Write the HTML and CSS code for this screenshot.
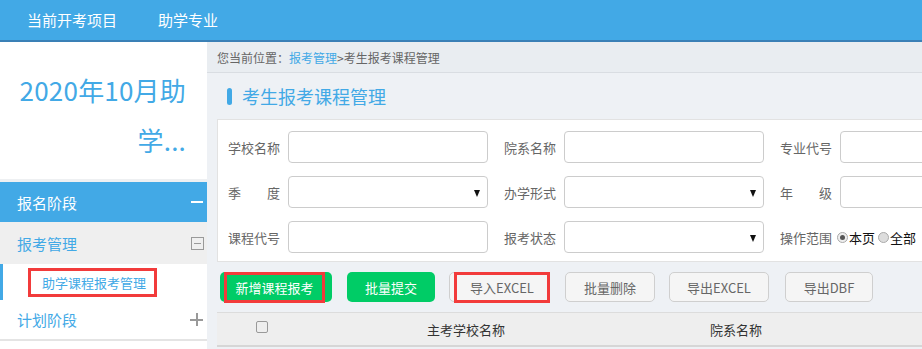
FILE: index.html
```html
<!DOCTYPE html>
<html lang="zh">
<head>
<meta charset="utf-8">
<title>考生报考课程管理</title>
<link rel="stylesheet" href="styles.css">
</head>
<body>
<header class="topbar">
  <nav class="topnav">
    <a class="topnav-item">当前开考项目</a>
    <a class="topnav-item">助学专业</a>
  </nav>
</header>
<div class="layout">
  <aside class="sidebar">
    <div class="side-title">2020年10月助学...</div>
    <div class="side-stage side-stage-open">
      <span>报名阶段</span>
      <span class="stage-minus"></span>
    </div>
    <div class="side-group">
      <span>报考管理</span>
      <span class="box-minus"></span>
    </div>
    <div class="side-item side-item-active">
      <span class="side-item-text hl">助学课程报考管理</span>
    </div>
    <div class="side-stage side-stage-closed">
      <span>计划阶段</span>
      <span class="stage-plus"></span>
    </div>
  </aside>
  <main class="main">
    <div class="crumb">您当前位置：<a class="crumb-link">报考管理</a>&gt;考生报考课程管理</div>
    <div class="content">
      <h1 class="page-title">考生报考课程管理</h1>
      <div class="filter">
        <div class="frow">
          <label class="flabel">学校名称</label><div class="finput"></div>
          <label class="flabel">院系名称</label><div class="finput"></div>
          <label class="flabel">专业代号</label><div class="finput"></div>
        </div>
        <div class="frow">
          <label class="flabel just">季度</label><div class="finput fselect"><span class="arrow"></span></div>
          <label class="flabel">办学形式</label><div class="finput fselect"><span class="arrow"></span></div>
          <label class="flabel just">年级</label><div class="finput"></div>
        </div>
        <div class="frow">
          <label class="flabel">课程代号</label><div class="finput"></div>
          <label class="flabel">报考状态</label><div class="finput fselect"><span class="arrow"></span></div>
          <label class="flabel">操作范围</label>
          <div class="radios">
            <span class="radio radio-on"></span><span class="rtext">本页</span>
            <span class="radio"></span><span class="rtext">全部</span>
          </div>
        </div>
      </div>
      <div class="toolbar">
        <button class="btn btn-green btn-w1"><span class="hl hl-btn1">新增课程报考</span></button>
        <button class="btn btn-green btn-w2">批量提交</button>
        <button class="btn btn-gray btn-w3"><span class="hl hl-btn3">导入EXCEL</span></button>
        <button class="btn btn-gray btn-w6">批量删除</button>
        <button class="btn btn-gray btn-w4">导出EXCEL</button>
        <button class="btn btn-gray btn-w5">导出DBF</button>
      </div>
      <div class="thead">
        <div class="th th-check"><span class="checkbox"></span></div>
        <div class="th th-school">主考学校名称</div>
        <div class="th th-dept">院系名称</div>
        <div class="th th-rest"></div>
      </div>
    </div>
  </main>
</div>
</body>
</html>
```
FILE: styles.css
```css
* { box-sizing: border-box; }
html, body { margin: 0; padding: 0; }
body {
  width: 922px;
  height: 349px;
  overflow: hidden;
  background: #eef1f5;
  font-family: "Noto Sans CJK SC", "Noto Sans", sans-serif;
  color: #666;
}
.topbar {
  height: 42px;
  background: #42a9e6;
  border-bottom: 2px solid #3a80b6;
}
.topnav { display: flex; height: 40px; align-items: center; padding-left: 27px; gap: 41px; }
.topnav-item { color: #fff; font-size: 15px; line-height: 20px; }

.layout { display: flex; height: 307px; }
.sidebar { width: 207px; flex: none; background: #fff; display: flex; flex-direction: column; }
.side-title {
  height: 140px;
  padding: 23px 21px 0 16px;
  border-bottom: 3px solid #eef0f2;
  color: #42a9e6;
  font-size: 26px;
  line-height: 50px;
  text-align: right;
  letter-spacing: 0.2px;
}
.side-stage {
  height: 40px;
  display: flex;
  align-items: center;
  justify-content: space-between;
  padding: 0 4px 0 17px;
  font-size: 15px;
}
.side-stage-open { background: #42a9e6; color: #fff; }
.side-stage-closed { color: #42a9e6; border-bottom: 2px solid #e4e4e4; height: 41px; }
.stage-minus { width: 12px; height: 2px; background: #fff; }
.stage-plus { width: 13px; height: 13px; position: relative; }
.stage-plus::before, .stage-plus::after { content: ""; position: absolute; background: #999; }
.stage-plus::before { left: 0; top: 5.5px; width: 13px; height: 2px; }
.stage-plus::after { top: 0; left: 5.5px; width: 2px; height: 13px; }
.side-group {
  height: 42px;
  background: #efefef;
  display: flex;
  align-items: center;
  justify-content: space-between;
  padding: 0 3px 0 17px;
  color: #42a9e6;
  font-size: 15px;
}
.box-minus {
  width: 13px; height: 13px;
  border: 1px solid #999;
  display: flex; align-items: center; justify-content: center;
}
.box-minus::before { content: ""; width: 7px; height: 1px; background: #999; }
.side-item {
  height: 36px;
  display: flex;
  align-items: center;
  font-size: 13px;
  color: #42a9e6;
}
.side-item-active { border-left: 3px solid #42a9e6; padding-left: 25px; }
.side-item-text { padding: 2px 8px 2px 11px; }
.hl { border: 3px solid #f23b3b; }

.main { flex: 1; min-width: 0; }
.crumb {
  height: 31px;
  padding-left: 10px;
  display: flex;
  align-items: center;
  font-size: 12px;
  color: #666;
  background: #e9edf1;
  border-bottom: 1px solid #d9dde2;
}
.crumb-link { color: #42a9e6; }
.content { padding-left: 10px; width: 760px; }
.page-title {
  margin: 0;
  height: 46px;
  display: flex;
  align-items: center;
  padding-left: 10px;
  font-size: 18px;
  font-weight: normal;
  color: #42a9e6;
}
.page-title::before {
  content: "";
  width: 5px; height: 17px;
  border-radius: 3px;
  background: #42a9e6;
  margin-right: 10px;
}
.filter {
  width: 760px;
  background: #fff;
  border: 1px solid #e2e2e2;
  border-right: none;
  padding: 11px 0 8px 10px;
  display: flex;
  flex-direction: column;
  gap: 13px;
}
.frow { display: flex; align-items: center; height: 32px; }
.flabel { width: 52px; margin-right: 8px; font-size: 13px; color: #666; flex: none; white-space: nowrap; }
.flabel.just { text-align: justify; text-align-last: justify; }
.finput {
  width: 200px; height: 32px; flex: none;
  border: 1px solid #ccc;
  border-radius: 4px;
  margin-right: 16px;
  position: relative;
}
.fselect .arrow {
  position: absolute;
  right: 7px; top: 13px;
  width: 0; height: 0;
  border-left: 3.5px solid transparent;
  border-right: 3.5px solid transparent;
  border-top: 7px solid #111;
}
.radios { display: flex; align-items: center; font-size: 13px; color: #111; margin-left: -3px; }
.radio {
  width: 11px; height: 11px; border-radius: 50%;
  border: 1px solid #aaa;
  background: #ddd;
  display: inline-flex; align-items: center; justify-content: center;
}
.radio-on { background: #eee; }
.radio-on::before { content: ""; width: 5px; height: 5px; border-radius: 50%; background: #555; }
.rtext { margin: 0 3px 0 1px; }

.toolbar { display: flex; align-items: center; height: 50px; padding-left: 3px; }
.btn {
  height: 30px;
  border-radius: 5px;
  font-family: inherit;
  font-size: 13px;
  padding: 0;
  display: flex; align-items: center; justify-content: center;
  cursor: pointer;
  flex: none;
}
.btn-green { background: #00cc66; border: none; color: #fff; }
.btn-gray { background: #f5f5f5; border: 1px solid #cfcfcf; color: #666; }
.btn-w1 { width: 112px; margin-right: 15px; }
.btn-w2 { width: 88px; margin-right: 14px; }
.btn-w3 { width: 101px; justify-content: flex-end; margin-right: 15px; }
.btn-w6 { width: 90px; margin-right: 14px; }
.btn-w4 { width: 100px; margin-right: 16px; }
.btn-w5 { width: 88px; }
.hl-btn1 { width: 101px; height: 31px; display: flex; align-items: center; justify-content: center; margin-left: -3px; }
.hl-btn3 { width: 96px; height: 31px; display: flex; align-items: center; justify-content: center; margin-right: -1px; }

.thead {
  height: 35px;
  width: 760px;
  display: flex;
  align-items: center;
  background: #eeeeee;
  border-top: 1px solid #dcdcdc;
  border-bottom: 2px solid #d6d6d6;
  font-size: 13px;
  color: #333;
}
.th { display: flex; align-items: center; justify-content: center; }
.th-check { width: 92px; }
.th-school { width: 314px; }
.th-dept { width: 226px; }
.checkbox { width: 12px; height: 12px; border: 1px solid #999; border-radius: 2px; background: #eee; margin-left: -2px; margin-top: -4px; }
```
